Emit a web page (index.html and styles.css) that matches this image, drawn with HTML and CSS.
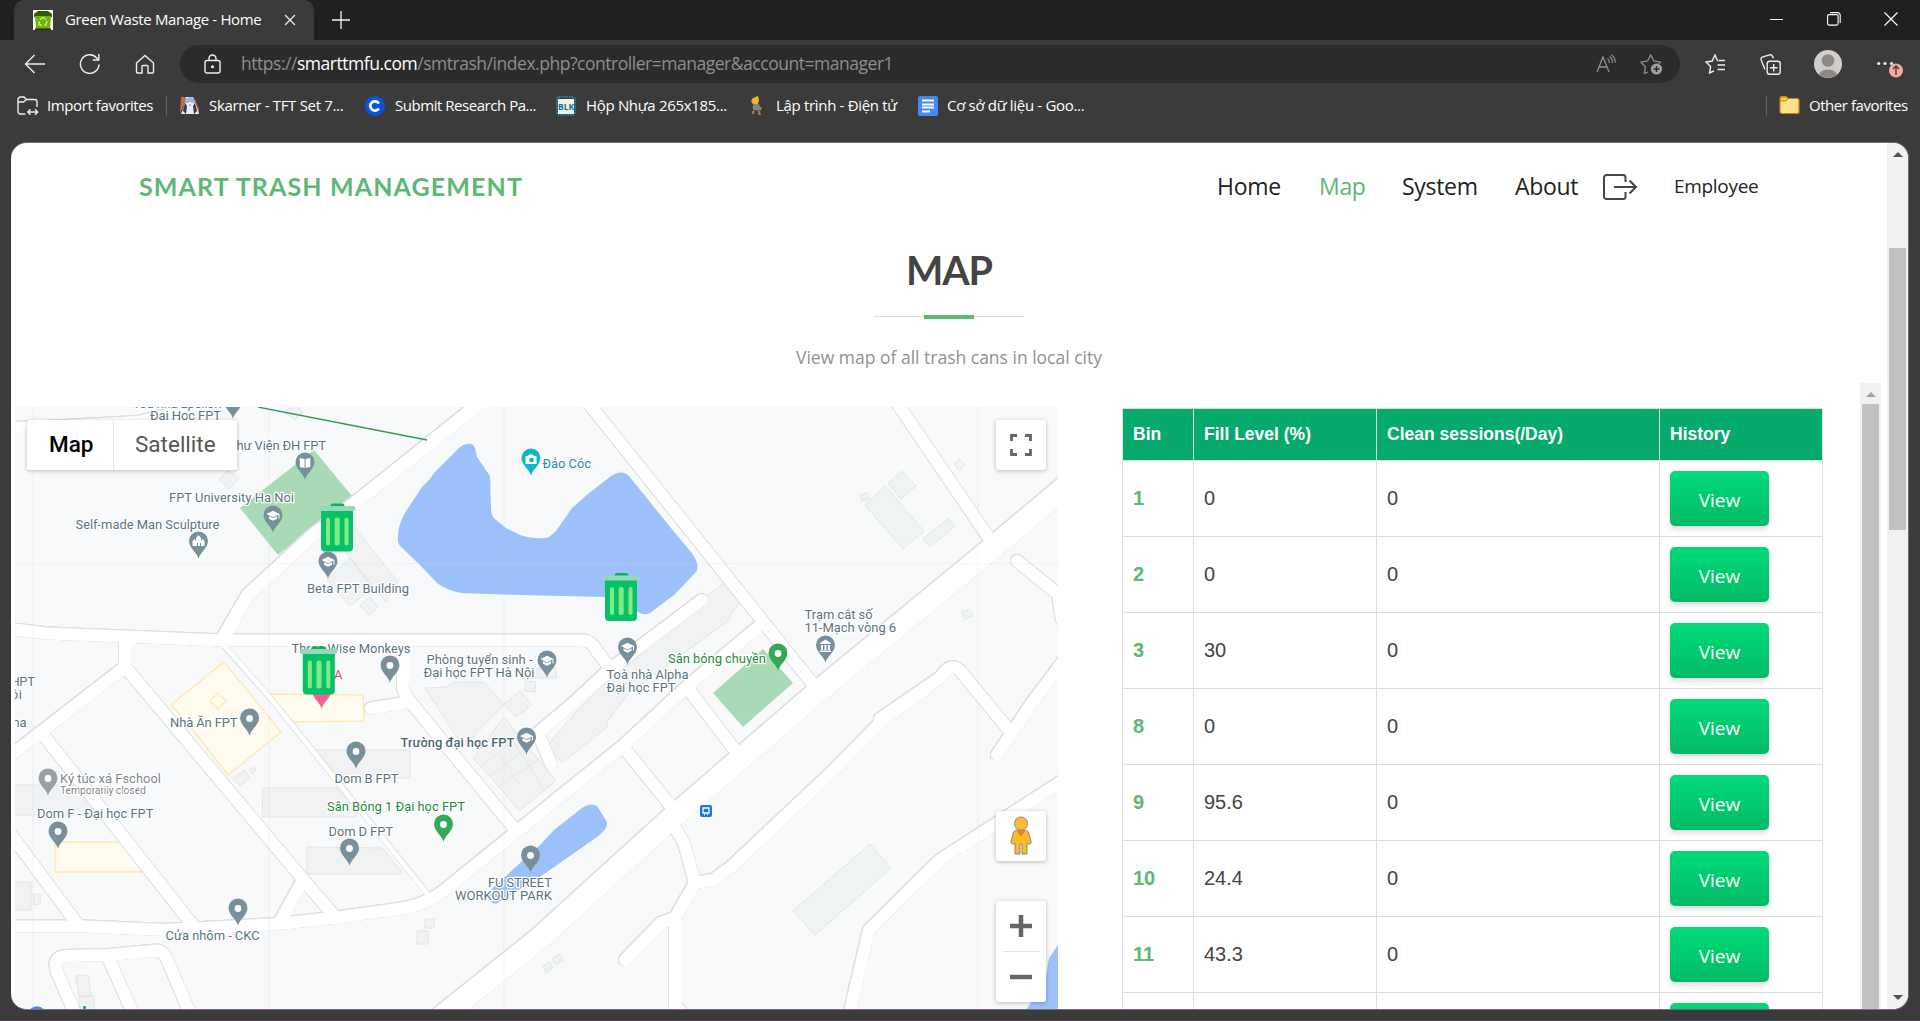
FILE: index.html
```html
<!DOCTYPE html>
<html lang="en">
<head>
<meta charset="utf-8">
<title>Green Waste Manage - Home</title>
<link rel="stylesheet" href="styles.css">
</head>
<body>
<div class="tabs">
  <div class="tab">
    <svg class="tab-icon" width="20" height="20" viewBox="0 0 20 20"><rect width="20" height="20" fill="#fff"/><path d="M1 4l4-3h10l4 3v3H1z" fill="#2f5d05"/><path d="M2 6h16l-1 13H3z" fill="#6eb20a"/><path d="M2 18.500h16V20H2z" fill="#1d2a12"/><path d="M7 9.500l3-2 3 2M14 11l-1 4-2 .5M9 15.500l-3-1 .5-3" fill="none" stroke="#c5ec84" stroke-width="1.500"/></svg>
    <span class="tab-title">Green Waste Manage - Home</span>
    <svg class="tab-close" width="12" height="12" viewBox="0 0 12 12"><path d="M1 1l10 10M11 1L1 11" stroke="#eee" stroke-width="1.300"/></svg>
  </div>
  <svg class="tab-new" width="18" height="18" viewBox="0 0 18 18"><path d="M9 0v18M0 9h18" stroke="#f2f2f2" stroke-width="1.300"/></svg>
  <div class="window-buttons">
    <svg width="14" height="14" viewBox="0 0 14 14"><path d="M0 7.500h13" stroke="#fff"/></svg>
    <svg width="14" height="14" viewBox="0 0 14 14" fill="none" stroke="#fff" stroke-width="1.100"><rect x=".6" y="2.600" width="10.500" height="10.500" rx="1.500"/><path d="M3 .6h7.500a2.700 2.700 0 0 1 2.700 2.700V11"/></svg>
    <svg width="14" height="14" viewBox="0 0 14 14"><path d="M.5 .5l13 13M13.500 .5l-13 13" stroke="#fff" stroke-width="1.200"/></svg>
  </div>
</div>

<div class="toolbar">
  <svg class="tool-back" width="22" height="20" viewBox="0 0 22 20"><path d="M10.500 1L1.500 10l9 9M1.500 10H21" fill="none" stroke="#eee" stroke-width="1.400"/></svg>
  <svg class="tool-reload" width="22" height="22" viewBox="0 0 22 22"><path d="M20 11.500A9.300 9.300 0 1 1 17.500 4.700L19.500 7M19.800 1v6h-6" fill="none" stroke="#eee" stroke-width="1.400"/></svg>
  <svg class="tool-home" width="20" height="20" viewBox="0 0 20 20"><path d="M1.500 9L10 1.500 18.500 9v9a1 1 0 0 1-1 1H13v-6.500a1 1 0 0 0-1-1H8a1 1 0 0 0-1 1V19H2.500a1 1 0 0 1-1-1z" fill="none" stroke="#eee" stroke-width="1.400"/></svg>
  <div class="address">
    <svg width="17" height="20" viewBox="0 0 17 20" fill="none" stroke="#eee" stroke-width="1.400"><rect x="1" y="6.500" width="15" height="12.500" rx="2"/><path d="M5 6.500V4.500a3.500 3.500 0 0 1 7 0v2"/><circle cx="8.500" cy="12.700" r=".8" fill="#eee"/></svg>
    <span class="url">https://<b>smarttmfu.com</b>/smtrash/index.php?controller=manager&amp;account=manager1</span>
    <svg class="read-aloud" width="21" height="20" viewBox="0 0 21 20" fill="none" stroke="#8f8f8f" stroke-width="1.300"><path d="M1 18L7 3l6 15M3 13h8M11.500 4.500q2 1.500 2 4.500M13.500 2.500q3 2 3 6.500M15.500 .8q3.700 3 3.900 7.700"/></svg>
    <svg class="add-star" width="23" height="22" viewBox="0 0 23 22"><path d="M8 19L4.500 20.500 5.300 13.800 1 9.200 7.600 8 10.700 2l3.200 6 6.500 1.200-2 2.200" fill="none" stroke="#8f8f8f" stroke-width="1.300"/><circle cx="16.500" cy="16" r="5.600" fill="#a0a0a0"/><path d="M16.500 13v6M13.500 16h6" stroke="#2b2b2b" stroke-width="1.400"/></svg>
  </div>
  <svg class="tool-favorites" width="21" height="20" viewBox="0 0 21 20" fill="none" stroke="#eee" stroke-width="1.400"><path d="M13 6.500L12.400 6.500 10 1 7.200 7 1 8l4.600 4.400L4.600 19 9 16.800M13.500 6.500H20M12.500 11H20M12.500 15.500H20"/></svg>
  <svg class="tool-collections" width="21" height="21" viewBox="0 0 21 21" fill="none" stroke="#eee" stroke-width="1.400"><rect x="7.200" y="7.200" width="13" height="13" rx="2.500"/><path d="M13.700 10v7.500M10 13.700h7.500M5 15.500L1.200 6q-.7-2 1-2.800L9.500 .9q2-.5 3 1.200l1 2.300"/></svg>
  <svg class="tool-avatar" width="28" height="28" viewBox="0 0 28 28"><circle cx="14" cy="14" r="14" fill="#d0cecb"/><circle cx="14" cy="10.500" r="6.300" fill="#8d8883"/><path d="M5 24.500a9.500 7.500 0 0 1 18 0A14 14 0 0 1 5 24.500z" fill="#8d8883"/></svg>
  <svg class="tool-more" width="27" height="22" viewBox="0 0 27 22"><g fill="#eee"><circle cx="1.700" cy="7.500" r="1.600"/><circle cx="8" cy="7.500" r="1.600"/><circle cx="14.500" cy="7.500" r="1.600"/></g><circle cx="19" cy="14.500" r="7" fill="#f6a8a1"/><path d="M19 19v-8.500M16 13l3-3 3 3" fill="none" stroke="#3b3b3b" stroke-width="1.300"/></svg>
</div>

<div class="bookmarks">
  <svg width="22" height="20" viewBox="0 0 22 20" fill="none" stroke="#eee" stroke-width="1.400"><path d="M8.500 18H3.500a2.500 2.500 0 0 1-2.500-2.500V3.500A2.500 2.500 0 0 1 3.500 1H7l2.500 2.500h8A2.500 2.500 0 0 1 20 6v5M1 6h5.500l3-2.500M11 16h9.500M13.500 13.200L10.800 16l2.700 2.800M18 13.200l2.700 2.800-2.700 2.800"/></svg>
  <span class="bm-text bm-import">Import favorites</span>
  <i class="bm-line"></i>
  <svg class="bm-skarner" width="20" height="19" viewBox="0 0 20 19"><path d="M1 1h5l-2 9-4 7zM14 1l5 12v4h-3z" fill="#c8673a"/><path d="M6 1h7l4 11 2 6H1l3-7z" fill="#f1edf2"/><path d="M5 5q5-8 10 0l-.5 2.500-4.500-1.500-4.500 1.500z" fill="#8fb6ef"/><path d="M5 7l-2 8 3 3 1-8zM15 7l2 8-3 3-1-8z" fill="#2f3566"/><path d="M8.500 8.500h3l-1.500 2z" fill="#e9a04a"/></svg>
  <span class="bm-text bm-t1">Skarner - TFT Set 7...</span>
  <svg class="bm-c" width="20" height="20" viewBox="0 0 20 20"><circle cx="10" cy="10" r="10" fill="#0a55da"/><path d="M13.800 7.500a4.600 4.600 0 1 0 0 5" fill="none" stroke="#fff" stroke-width="2.700"/></svg>
  <span class="bm-text bm-t2">Submit Research Pa...</span>
  <svg class="bm-blk" width="20" height="20" viewBox="0 0 20 20"><rect x="1" y="1" width="18" height="18" rx="2" fill="none" stroke="#1b84b8" stroke-width="2" stroke-dasharray="1.500 1"/><rect x="2" y="3" width="16" height="15" fill="#f6f1de"/><text x="2" y="13.500" font-size="8" textLength="16" lengthAdjust="spacingAndGlyphs" font-weight="bold" fill="#0b6aa2">BLK</text></svg>
  <span class="bm-text bm-t3">Hộp Nhựa 265x185...</span>
  <svg class="bm-el" width="13" height="19" viewBox="0 0 13 19"><path d="M3 2l5-2 1 4-1 4H3L1 5z" fill="#f0b323"/><path d="M3 8h6l2 5-3 2-5-2z" fill="#7b8894"/><path d="M2 10l4 2-2 3zM9 12l3-1-1 4z" fill="#b98257"/><path d="M2 15l3-1-1 4H2zM8 15h2l1 4H8z" fill="#9d7450"/></svg>
  <span class="bm-text bm-t4">Lập trình - Điện tử</span>
  <svg class="bm-doc" width="20" height="20" viewBox="0 0 20 20"><rect width="20" height="20" rx="2" fill="#4688f4"/><path d="M4 4.500h12M4 8.500h12M4 11.500h12M4 15.500h8" stroke="#fff" stroke-width="1.900"/></svg>
  <span class="bm-text bm-t5">Cơ sở dữ liệu - Goo...</span>
  <i class="bm-line bm-line-right"></i>
  <svg class="bm-folder" width="21" height="19" viewBox="0 0 21 19"><path d="M1 4.500V2.500a2 2 0 0 1 2-2h4l2.500 2H18a2 2 0 0 1 2 2v11a2 2 0 0 1-2 2H3a2 2 0 0 1-2-2z" fill="#ffe08a" stroke="#bb8a10" stroke-width="1.200"/><path d="M1.500 5h5.500l2.300-2.300L7 1H3a1.500 1.500 0 0 0-1.500 1.500z" fill="#fccf3a" stroke="#bb8a10"/></svg>
  <span class="bm-text bm-other">Other favorites</span>
</div>

<div class="viewport">
  <div class="page">
    <header class="header">
      <div class="brand">SMART TRASH MANAGEMENT</div>
      <nav class="nav">
        <a class="n-home">Home</a><a class="n-map active">Map</a><a class="n-system">System</a><a class="n-about">About</a>
        <svg width="35" height="26" viewBox="0 0 35 26" fill="none" stroke="#444" stroke-width="2"><path d="M22.500 8V3.500a2.500 2.500 0 0 0-2.500-2.500H3.500A2.500 2.500 0 0 0 1 3.500v19A2.500 2.500 0 0 0 3.500 25H20a2.500 2.500 0 0 0 2.500-2.500V18M11 13h22M26.500 6.500L33 13l-6.500 6.500"/></svg>
        <a class="n-employee">Employee</a>
      </nav>
    </header>
    <section class="title">
      <h2>MAP</h2>
      <div class="rule"><i></i></div>
      <p>View map of all trash cans in local city</p>
    </section>
    <div class="columns">
      <div class="map">
        <svg class="map-canvas" width="1043" height="603" viewBox="15 407 1043 603">
          <defs>
            <path id="pin" d="M0 0C-.8-6-9.500-11-9.500-18a9.500 9.500 0 0 1 19 0C9.500-11 .8-6 0 0z"/>
            <circle id="dot" cy="-17.500" r="3.400" fill="#fff"/>
            <g id="cap" fill="#fff"><path d="M-6.500-19L0-22.200 6.500-19 0-15.600z"/><path d="M-4-16.800L0-14.700 4-16.800V-14.200L0-12.200-4-14.200zM5.500-19H6.500V-14.500H5.500z"/></g>
            <g id="bin"><path d="M12 2.500q0-2.500 2.500-2.500h9q2.500 0 2.500 2.500V5H12z" fill="#05b35a"/><path d="M2.500 5h32v39q0 4-4 4h-24q-4 0-4-4z" fill="#06c167"/><rect x="0" y="2.500" width="37" height="5" rx="2" fill="#95d9bd"/><g fill="#82ea85"><rect x="7.500" y="14" width="4" height="28" rx="2"/><rect x="16.200" y="14" width="5" height="28" rx="2"/><rect x="26" y="14" width="4" height="28" rx="2"/></g></g>
            <g id="roads">
              <path d="M15 427L48 426 138 421 180 411 215 400" stroke-width="10"/>
              <path d="M484 400L355 503 312 536 248 595 223 638" stroke-width="13"/>
              <path d="M10 629L48 633.500 224 640.500H583Q592 641 597 651L610 668"/>
              <path d="M702 600L609 670 577 700 532 738M538 733L551 764"/>
              <path d="M757 628L691 683 624 745 520 829 446 889Q430 903 405 908L341 917 279 924 165 930 86 926.500H10"/>
              <path d="M586 400L816 688"/>
              <path d="M1070 483L995 546 820 690 672 818 540 938 435 1022" stroke-width="22"/>
              <path d="M895 400L991 541"/>
              <path d="M1017 561L1058 594 1062 620"/>
              <path d="M1068 655L1034 700 997 755M880 719L941 677Q952 660 962 673L1009 730"/>
              <path d="M925 690L886 717 834 770 731 867 713 880 695 883 684 843 677 831M695 883L675 918 661 923 625 960M675 918V1005L690 1022"/>
              <path d="M1070 776L940 860 869 930 848 1020"/>
              <path d="M689 690L741 758M624 748L671 806"/>
              <path d="M125 641V667L41 732 5 760M125 667L153 700 302 878 336 918M303 880L281 920M41 732L195 928M10 833L79 926"/>
              <path d="M403 641V687Q404 695 413 705L513 827M371 708.500L405 703"/>
              <path d="M78 1020L57 972Q52 957 66 956L110 955 152 951Q162 949 166 957L193 1020M108 957L136 1020"/>
            </g>
          </defs>
          <rect x="15" y="407" width="1043" height="603" fill="#f8f9fb"/>
          <g fill="#f1f2f3" stroke="#e2e4e6" stroke-width="1">
            <path d="M355 528L398 582 386 602 344 550zM350 558L373 588 350 606 327 580zM369 597L378 607 369 615 360 606zM228 470L239 479 229 489 219 480zM294 405L303 412 295 420 284 412z"/>
            <path d="M314 750H410V778H333zM263 788H337L358 813 355 817H262zM307 847L382 848 402 872 399 874H307zM233 779L244 770 250 777 240 786zM250 770L254 767 256 770 252 774z"/>
            <path d="M10 785H79L103 815H10zM10 882H31V910H10zM33 894H40L41 904 34 905zM425 919H434V928H425zM417 931H428V944H417zM76 976L88 975 91 996 79 997zM79 997L93 995 95 1012H80z"/>
            <path d="M425 688L446 687 453 682H484L504 705 463 747zM504 704L520 691 532 705 516 717zM504 717L532 752 556 781 519 811 502 790 499 787 473 758zM482 766L516 738M491 776L530 744M499 787L540 758M513 741L545 791M500 755L520 785M525 681L536 682 535 692 525 691zM537 668H556V678H537z"/>
            <path d="M725 582L741 602 731 613 729 620 627 695 607 722 607 727 562 763 548 745 559 732 575 713 586 702 597 690 640 655 654 643 686 620 702 600z"/>
            <path fill="#eff3f4" d="M885 486L924 531 903 549 865 505zM902 471L916 486 901 499 888 483zM949 518L955 526 930 547 923 539zM959 459L965 465 959 471 954 464zM860 495L867 493 869 499 862 501zM962 612L970 609 973 616 965 619zM870 844L891 868 815 935 793 911zM543 966L550 962 553 968 546 973zM552 959L559 954 563 960 556 965z"/>
          </g>
          <g fill="#fffbef" stroke="#fde9ae" stroke-width="1.300">
            <path d="M224 662L281 732 228 775 193 730 171 705zM218 693L226 701 218 709 210 701zM268 694L363 695 364 721 289 722zM55 842H130L151 868 148 872H55z"/>
          </g>
          <circle cx="520" cy="670" r="9" fill="none" stroke="#fde9ae" stroke-dasharray="3 2"/>
          <path d="M314 450L352 496 278 555 240 508zM763 649L793 683 743 727 713 693z" fill="#a8dab5"/>
          <path fill="#9cc0f9" d="M468 444Q473 443 475 448L477 457 490 476 491 508Q491 516 495 519L506 528 520 535Q528 538 536 538 545 539 549 537L556 531 572 508 588 494 611 476Q622 469 629 476L675 533 691 552Q699 562 697 571L674 595 650 613Q644 616 638 612L604 597 520 595 461 593Q446 590 437 583L418 563 401 547Q397 543 398 536 398 525 405 513L422 487 430 479 434 473 460 447Q464 444 468 444zM597 806L607 822Q608 829 597 837L540 877 497 903Q493 905 490 900L485 895 540 845 554 830 582 808Q591 802 597 806zM1058 945L1049 958 1045 983 1026 1010H1058z"/>
          <g class="road-case"><use href="#roads"/></g>
          <g class="road-fill"><use href="#roads"/></g>
          <path d="M224 646L272 700 427 893" fill="none" stroke="#dfe2e5" stroke-width="6.500"/>
          <path d="M222 643L272 700 429 896" fill="none" stroke="#fff" stroke-width="4.500"/>
          <path d="M258 407L427 440" stroke="#2f9a52" stroke-width="1.300"/>
          <path d="M33 407V1010M269 407V1010M504 407V1010M978 407V1010M15 563.500H1058" stroke="#d9dde2" stroke-opacity=".25" fill="none"/>
          <g fill="#78909c">
            <use href="#pin" x="233" y="419"/><use href="#pin" x="305" y="480"/><use href="#pin" x="273" y="533"/><use href="#pin" x="198.500" y="559"/><use href="#pin" x="328" y="579"/><use href="#pin" x="390" y="683"/><use href="#pin" x="547" y="678"/><use href="#pin" x="627.500" y="665"/><use href="#pin" x="825.500" y="663"/><use href="#pin" x="249.600" y="736"/><use href="#pin" x="356" y="769"/><use href="#pin" x="526.500" y="755"/><use href="#pin" x="58" y="849"/><use href="#pin" x="349.500" y="866"/><use href="#pin" x="530.500" y="873"/><use href="#pin" x="238" y="926"/>
          </g>
          <use href="#pin" x="48" y="796" fill="#9aa0a6"/><use href="#pin" x="778" y="671" fill="#34a853"/><use href="#pin" x="443.500" y="842" fill="#34a853"/><use href="#pin" x="531" y="476" fill="#12b5cb"/><use href="#pin" x="321.600" y="709" fill="#f06292"/>
          <use href="#dot" x="390" y="683"/><use href="#dot" x="249.600" y="736"/><use href="#dot" x="356" y="769"/><use href="#dot" x="58" y="849"/><use href="#dot" x="349.500" y="866"/><use href="#dot" x="530.500" y="873"/><use href="#dot" x="238" y="926"/><use href="#dot" x="48" y="796"/><use href="#dot" x="778" y="671"/><use href="#dot" x="443.500" y="842"/>
          <use href="#cap" x="233" y="419"/><use href="#cap" x="273" y="533"/><use href="#cap" x="328" y="579"/><use href="#cap" x="547" y="678"/><use href="#cap" x="627.500" y="665"/><use href="#cap" x="526.500" y="755"/>
          <g fill="#fff"><path d="M299.800 458l4.800 1v9l-4.800-1zM305.600 459l4.800-1v9l-4.800 1z"/><path d="M192.500 546v-5l2-2 1.500 2v-3l2.500-3 2.500 3v3l1.500-2 2 2v5h-3.500v-3h-1v3h-2v-3h-1v3z"/><path d="M820 643l5.500-3.500 5.500 3.500v1h-11zM821 645h2v5h-2zM824.500 645h2v5h-2zM828 645h2v5h-2zM820 650.500h11v1.500h-11z"/><path d="M525.500 456h2.500l1-1.500h4l1 1.500h2.500v8h-11z"/></g>
          <circle cx="531.500" cy="460" r="2.300" fill="#12b5cb"/>
          <rect x="700" y="805" width="12" height="12" rx="2" fill="#1a73e8"/><path d="M703 808h6v5h-6zM704 814.500h1M707 814.500h1" fill="none" stroke="#fff" stroke-width="1.300"/>
          <g class="labels">
            <text x="132.500" y="407.500" textLength="89">Toà nhà Epsilon</text>
            <text x="150" y="420" textLength="71">Đại Học FPT</text>
            <text x="229" y="449.500" textLength="97">Thư Viện ĐH FPT</text>
            <text x="169" y="502" textLength="125">FPT University Ha Noi</text>
            <text x="75.500" y="528.500" textLength="144">Self-made Man Sculpture</text>
            <text x="307" y="592.500" textLength="102">Beta FPT Building</text>
            <text x="291.500" y="652.500" textLength="119">Three Wise Monkeys</text>
            <text x="426.500" y="664" textLength="106">Phòng tuyển sinh -</text>
            <text x="423.500" y="676.500" textLength="111">Đại học FPT Hà Nội</text>
            <text x="3" y="685.500" textLength="32">THPT</text>
            <text x="1" y="698.500" textLength="21">Nội</text>
            <text x="12.500" y="727" textLength="14">na</text>
            <text x="606.500" y="679" textLength="82">Toà nhà Alpha</text>
            <text x="606.500" y="692" textLength="69">Đại học FPT</text>
            <text x="804.600" y="619" textLength="68">Trạm cắt số</text>
            <text x="804.600" y="632" textLength="91.500">11-Mạch vòng 6</text>
            <text x="170" y="727" textLength="67.500">Nhà Ăn FPT</text>
            <text class="medium" x="400.500" y="746.500" textLength="114">Trường đại học FPT</text>
            <text x="334.500" y="782.500" textLength="64">Dom B FPT</text>
            <text x="328.500" y="836" textLength="64.500">Dom D FPT</text>
            <text x="37" y="818" textLength="116.500">Dom F - Đại học FPT</text>
            <text x="165.600" y="940" textLength="94">Cửa nhôm - CKC</text>
            <text x="488" y="886.500" textLength="64">FU STREET</text>
            <text x="455" y="899.500" textLength="97">WORKOUT PARK</text>
            <text class="closed" x="60" y="782.500" textLength="101">Ký túc xá Fschool</text>
            <text class="closed small" x="60" y="793.500" textLength="86">Temporarily closed</text>
            <text class="green" x="668" y="662.500" textLength="98">Sân bóng chuyền</text>
            <text class="green" x="327" y="811" textLength="138">Sân Bóng 1 Đại học FPT</text>
            <text class="teal" x="542.500" y="468" textLength="48.500">Đảo Cóc</text>
            <text class="pink" x="334" y="678.500">A</text>
          </g>
          <use href="#bin" x="318.500" y="503.500"/><use href="#bin" x="300.300" y="646.500"/><use href="#bin" x="602.500" y="573"/>
          <path d="M31 1010q6-5 12 0" fill="none" stroke="#4285f4" stroke-width="2.500"/><path d="M84.500 1006v4" stroke="#0f9d58" stroke-width="2.500"/>
        </svg>
        <div class="map-controls">
          <div class="map-types"><span class="on">Map</span><span class="off">Satellite</span></div>
          <div class="map-side">
            <div class="box full"><svg width="22" height="22" viewBox="0 0 22 22"><path d="M1.500 7V1.500H7M15 1.500h5.500V7M20.500 15v5.500H15M7 20.500H1.500V15" fill="none" stroke="#666" stroke-width="2.800"/></svg></div>
            <div class="box pegman"><svg width="22" height="40" viewBox="0 0 22 40"><g fill="#fbbc2c" stroke="#7f7f7f" stroke-width=".9"><path d="M6 14L3.500 16 .7 26.500l2.300 1.800 2-1.500V38h5V28h2v10h5V26.800l2 1.500 2.300-1.800L18.500 16 16 14z"/><circle cx="11" cy="7.500" r="6.500"/></g><path d="M6.500 14.500h9L11 21z" fill="#e2803a"/></svg></div>
            <div class="box zoom"><svg width="24" height="24" viewBox="0 0 24 24"><path d="M12 1v22M1 12h22" stroke="#666" stroke-width="4.500"/></svg><i></i><svg width="24" height="24" viewBox="0 0 24 24"><path d="M1 12h22" stroke="#666" stroke-width="4.500"/></svg></div>
          </div>
        </div>
      </div>
      <div class="list">
        <table>
          <thead><tr><th class="c1">Bin</th><th class="c2">Fill Level (%)</th><th class="c3">Clean sessions(/Day)</th><th class="c4">History</th></tr></thead>
          <tbody>
            <tr><td class="id">1</td><td>0</td><td>0</td><td><button>View</button></td></tr>
            <tr><td class="id">2</td><td>0</td><td>0</td><td><button>View</button></td></tr>
            <tr><td class="id">3</td><td>30</td><td>0</td><td><button>View</button></td></tr>
            <tr><td class="id">8</td><td>0</td><td>0</td><td><button>View</button></td></tr>
            <tr><td class="id">9</td><td>95.6</td><td>0</td><td><button>View</button></td></tr>
            <tr><td class="id">10</td><td>24.4</td><td>0</td><td><button>View</button></td></tr>
            <tr><td class="id">11</td><td>43.3</td><td>0</td><td><button>View</button></td></tr>
            <tr><td></td><td></td><td></td><td><button>View</button></td></tr>
          </tbody>
        </table>
        <div class="list-scroll"><i class="arrow-up pale"></i><div class="list-thumb"></div></div>
      </div>
    </div>
  </div>
  <div class="page-scroll"><i class="arrow-up"></i><div class="page-thumb"></div><i class="arrow-down"></i></div>
</div>
</body>
</html>
```
FILE: styles.css
```css
* { box-sizing: border-box; }
html, body { margin: 0; height: 1021px; overflow: hidden; }
body {
  display: flex;
  flex-direction: column;
  background: #3b3b3b;
  font-family: "Open Sans", "Noto Sans", sans-serif;
  border-bottom: 1px solid #53425a;
}
svg { display: block; flex: none; }
span, a { white-space: nowrap; }

/* Tab strip */
.tabs { flex: none; height: 40px; display: flex; background: #202020; }
.tab {
  width: 300px; margin-left: 14px; padding-left: 19px;
  display: flex; align-items: center;
  background: #3b3b3b; border-radius: 10px 10px 0 0;
}
.tab-title { width: 219px; margin-left: 12px; padding-bottom: 2px; color: #fff; font-size: 15px; letter-spacing: -0.34px; }
.tab-new { margin: 11px 0 0 18px; }
.window-buttons { display: flex; gap: 43px; margin: 12px 22px 0 auto; }

/* Toolbar */
.toolbar { flex: none; height: 48px; display: flex; align-items: center; padding-left: 24px; }
.tool-reload { margin-left: 33px; }
.tool-home { margin-left: 34px; }
.address {
  display: flex; align-items: center;
  width: 1500px; height: 38px; margin-left: 25px; padding: 0 17px 0 24px;
  border-radius: 19px; background: #2b2b2b;
}
.url { margin-left: 20px; padding-bottom: 2px; color: #8f8f8f; font-size: 17.5px; letter-spacing: -0.47px; }
.url b { color: #fff; font-weight: 400; }
.read-aloud { margin-left: auto; }
.add-star { margin-left: 23px; }
.tool-favorites { margin-left: 25px; }
.tool-collections { margin-left: 34px; }
.tool-avatar { margin-left: 33px; }
.tool-more { margin: 5px 0 0 35px; }

/* Bookmarks */
.bookmarks { flex: none; height: 54px; padding: 8px 0 0 17px; display: flex; align-items: flex-start; }
.bookmarks svg { align-self: flex-start; }
.bm-text { height: 20px; line-height: 18px; color: #fff; font-size: 15px; letter-spacing: -0.32px; }
.bm-import { width: 119px; margin-left: 8px; letter-spacing: -0.4px; }
.bm-line { width: 1px; height: 20px; background: #636363; }
.bm-skarner { margin-left: 13px; }
.bm-t1 { width: 156px; margin-left: 9px; }
.bm-t2 { width: 161px; margin-left: 10px; letter-spacing: -0.46px; }
.bm-t3 { width: 164px; margin-left: 10px; }
.bm-t4 { width: 142px; margin-left: 13px; }
.bm-t5 { margin-left: 9px; }
.bm-line-right { margin-left: auto; }
.bm-folder { margin-left: 12px; }
.bm-other { width: 98px; margin: 0 13px 0 9px; letter-spacing: -0.45px; }

/* Page frame */
.viewport {
  flex: none; width: 1898px; height: 868px; margin-left: 11px;
  display: flex; overflow: hidden;
  background: #fff; border: solid #707070; border-width: 1px 1px 1px 0; border-radius: 16px;
}
.page { width: 1876px; overflow: hidden; }
.page-scroll {
  width: 21px; padding-top: 9px; display: flex; flex-direction: column; align-items: center;
  background: #f1f1f1;
}
.arrow-up { border: 5px solid transparent; border-top: 0; border-bottom-color: #505050; }
.arrow-up.pale { border-bottom-color: #a3a3a3; }
.arrow-down { border: 5px solid transparent; border-bottom: 0; border-top-color: #505050; margin: auto 0 9px; }
.page-thumb { width: 17px; height: 282px; margin-top: 91px; background: #c1c1c1; }

/* Site header */
.header { height: 88px; display: flex; align-items: center; padding-left: 128px; }
.brand { width: 1078px; padding-bottom: 2px; color: #5cb874; font: 700 25px/30px Lato, sans-serif; letter-spacing: 1.13px; }
.nav { display: flex; align-items: center; color: #222; font-size: 23px; line-height: 28px; letter-spacing: -0.3px; }
.nav a { padding-bottom: 2px; }
.n-home { width: 102px; }
.n-map { width: 83px; }
.n-system { width: 113px; }
.n-about { width: 88px; }
.nav .active { color: #5cb874; }
.n-employee { margin-left: 36px; font-size: 19px; }

.title { height: 176px; display: flex; flex-direction: column; align-items: center; }
.title h2 { margin: 14px 0 0; color: #444; font: 700 39.5px/50px Lato, sans-serif; letter-spacing: -1.1px; }
.rule { width: 150px; height: 4px; margin-top: 20px; display: flex; justify-content: center; background: linear-gradient(#ddd, #ddd) 0 1px / 100% 1px no-repeat; }
.rule i { width: 50px; background: #5cb874; }
.title p { margin: 25px 0 0; color: #919191; font-size: 17.500px; line-height: 26px; }

/* Map */
.columns { display: flex; padding-left: 4px; }
.map { display: grid; width: 1043px; height: 603px; overflow: hidden; }
.map-canvas, .map-controls { grid-area: 1 / 1; }
.road-case, .road-fill { fill: none; stroke-linejoin: round; stroke-linecap: round; stroke-width: 12px; }
.road-case { stroke: #dddfe2; filter: drop-shadow(0.9px 0 0 #dddfe2) drop-shadow(-0.9px 0 0 #dddfe2) drop-shadow(0 0.6px 0 #dddfe2) drop-shadow(0 -0.6px 0 #dddfe2); }
.road-fill { stroke: #fff; }
.labels { font: 13px Roboto, sans-serif; fill: #5b7480; stroke: #fff; stroke-width: 2.5px; stroke-linejoin: round; paint-order: stroke; }
.labels .medium { font-weight: 500; fill: #4c6773; }
.labels .closed { fill: #80868b; }
.labels .small { font-size: 10.5px; }
.labels .green { fill: #238a43; }
.labels .teal { fill: #16909f; }
.labels .pink { fill: #e83e74; }
.map-controls { display: flex; justify-content: space-between; align-items: flex-start; padding: 13px 12px 0; z-index: 1; }
.map-types { display: flex; height: 50px; background: #fff; border-radius: 3px; box-shadow: 0 1px 4px rgba(0, 0, 0, .25); font: 22.5px/49px Roboto, sans-serif; }
.on { width: 87px; padding-left: 22px; color: #000; font-weight: 500; border-right: 1px solid #e9e9e9; }
.off { width: 123px; padding-left: 21px; color: #565656; }
.map-side { display: flex; flex-direction: column; }
.box { width: 50px; height: 50px; display: flex; flex-direction: column; align-items: center; justify-content: center; background: #fff; border-radius: 3px; box-shadow: 0 1px 4px rgba(0, 0, 0, .25); }
.pegman { margin-top: 341px; }
.zoom { height: 101px; margin-top: 40px; padding: 13px 0; justify-content: space-between; }
.zoom i { width: 37px; height: 1px; background: #e3e3e3; }

/* Bin table */
.list { display: flex; justify-content: space-between; width: 823px; margin-left: 0; padding-left: 64px; height: 627px; margin-top: -24px; }
table { width: 701px; height: 0; margin-top: 25px; border-collapse: collapse; table-layout: fixed; font: 20px/24px "Liberation Sans", Arial, sans-serif; color: #444; }
th, td { border: 1px solid #ddd; padding: 0 10px 2px; text-align: left; }
th { height: 52px; background: #06aa6d; color: #fff; font-size: 17.500px; }
td { height: 76px; }
td:last-child { padding-bottom: 0; }
.c1 { width: 71px; }
.c2 { width: 183px; }
.c3 { width: 283px; }
.id { color: #5cb874; font-weight: 700; }
button {
  display: block; width: 99px; height: 55px; padding: 2px 0 0; border: 0; border-radius: 5px;
  background: linear-gradient(#00da78, #03bb66); color: #fff;
  font: 19px/26px "Open Sans", sans-serif;
  box-shadow: 0 3px 5px rgba(0, 0, 0, .14);
}
.list-scroll { width: 21px; display: flex; flex-direction: column; align-items: center; padding-top: 9px; background: #f1f1f1; }
.list-thumb { width: 17px; flex: 1; margin-top: 7px; background: #c1c1c1; }
```
